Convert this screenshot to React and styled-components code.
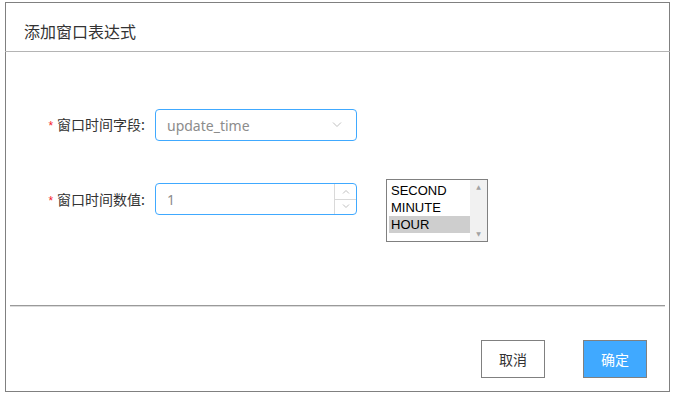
import React, { useState } from 'react'
import styled, { createGlobalStyle } from 'styled-components'

const GlobalStyle = createGlobalStyle`
  html, body {
    margin: 0;
    padding: 0;
    background: #fff;
  }
  body {
    font-family: "Noto Sans CJK SC", "Liberation Sans", sans-serif;
  }
`

const units = ['SECOND', 'MINUTE', 'HOUR']

const Chevron = ({ up }) => (
  <svg width="10" height="6" viewBox="0 0 10 6">
    <path
      d={up ? 'M1 5.5 L5 1.5 L9 5.5' : 'M1 0.5 L5 4.5 L9 0.5'}
      fill="none"
      stroke="#bfbfbf"
      strokeWidth="1"
    />
  </svg>
)

const SmallChevron = ({ up }) => (
  <svg width="8" height="5" viewBox="0 0 8 5">
    <path
      d={up ? 'M1 4.5 L4 1.5 L7 4.5' : 'M1 0.5 L4 3.5 L7 0.5'}
      fill="none"
      stroke="#bfbfbf"
      strokeWidth="1"
    />
  </svg>
)

function App() {
  const [unit, setUnit] = useState('HOUR')

  return (
    <>
      <GlobalStyle />
      <Dialog>
        <Header>添加窗口表达式</Header>
        <Body>
          <Row>
            <Label><Star>*</Star>窗口时间字段:</Label>
            <SelectBox>
              <Value>update_time</Value>
              <Chevron />
            </SelectBox>
          </Row>
          <Row top>
            <Label offset>
              <Star>*</Star>窗口时间数值:
            </Label>
            <NumberBox>
              <Value>1</Value>
              <Spinner>
                <SpinBtn><SmallChevron up /></SpinBtn>
                <SpinBtn bottom><SmallChevron /></SpinBtn>
              </Spinner>
            </NumberBox>
            <ListBox>
              <Options>
                {units.map(u => (
                  <Option key={u} selected={u === unit} onClick={() => setUnit(u)}>
                    {u}
                  </Option>
                ))}
              </Options>
              <ScrollBar>
                <ScrollArrow>▲</ScrollArrow>
                <ScrollArrow>▼</ScrollArrow>
              </ScrollBar>
            </ListBox>
          </Row>
        </Body>
        <Footer>
          <Button>取消</Button>
          <Button primary>确定</Button>
        </Footer>
      </Dialog>
    </>
  )
}

const Dialog = styled.div`
  box-sizing: border-box;
  margin: 2px 0 0 5px;
  width: 665px;
  height: 390px;
  border: 1px solid #808080;
  display: flex;
  flex-direction: column;
  background: #fff;
`

const Header = styled.div`
  height: 49px;
  box-sizing: border-box;
  padding: 17px 0 0 19px;
  font-size: 16px;
  line-height: 22px;
  color: #333;
  border-bottom: 1px solid #b4b4b4;
  margin: 0 -1px;
`

const Body = styled.div`
  height: 254px;
  box-sizing: border-box;
  padding-top: 56px;
  display: flex;
  flex-direction: column;
  gap: 37px;
  border-bottom: 1px solid #9a9a9a;
  box-shadow: 0 1px 0 #dcdcdc;
  margin: 0 4px;
`

const Row = styled.div`
  display: flex;
  align-items: ${p => (p.top ? 'flex-start' : 'center')};
`

const Label = styled.div`
  width: 135px;
  margin-right: 10px;
  text-align: right;
  font-size: 14px;
  line-height: 32px;
  color: #333;
  white-space: nowrap;
  margin-top: ${p => (p.offset ? '4px' : '0')};
`

const Star = styled.span`
  color: #f5222d;
  font-family: "Liberation Sans", sans-serif;
  font-size: 12px;
  margin-right: 4px;
`

const SelectBox = styled.div`
  box-sizing: border-box;
  width: 202px;
  height: 32px;
  border: 1px solid #40a9ff;
  border-radius: 4px;
  display: flex;
  align-items: center;
  justify-content: space-between;
  padding: 0 14px 0 11px;
`

const Value = styled.span`
  font-family: "Noto Sans", "Liberation Sans", sans-serif;
  font-size: 14px;
  color: #8c8c8c;
`

const NumberBox = styled.div`
  box-sizing: border-box;
  width: 202px;
  height: 32px;
  margin-top: 4px;
  border: 1px solid #40a9ff;
  border-radius: 4px;
  display: flex;
  align-items: center;
  justify-content: space-between;
  padding-left: 11px;
  overflow: hidden;
`

const Spinner = styled.div`
  width: 21px;
  height: 100%;
  border-left: 1px solid #d9d9d9;
  display: flex;
  flex-direction: column;
`

const SpinBtn = styled.div`
  flex: 1;
  display: flex;
  align-items: center;
  justify-content: center;
  border-top: ${p => (p.bottom ? '1px solid #d9d9d9' : 'none')};
`

const ListBox = styled.div`
  box-sizing: border-box;
  margin-left: 29px;
  width: 102px;
  height: 63px;
  border: 1px solid #808080;
  display: flex;
  background: #fff;
`

const Options = styled.div`
  flex: 1;
  padding: 2px 0 0 2px;
  font-family: "Liberation Sans", Arial, sans-serif;
  font-size: 13px;
  color: #000;
`

const Option = styled.div`
  height: 17px;
  line-height: 17px;
  padding-left: 2px;
  cursor: default;
  background: ${p => (p.selected ? '#cecece' : 'transparent')};
`

const ScrollBar = styled.div`
  width: 17px;
  background: #f1f1f1;
  display: flex;
  flex-direction: column;
  justify-content: space-between;
  align-items: center;
`

const ScrollArrow = styled.span`
  font-size: 6px;
  line-height: 14px;
  color: #a3a3a3;
  font-family: "DejaVu Sans", sans-serif;
`

const Footer = styled.div`
  flex: 1;
  display: flex;
  justify-content: flex-end;
  align-items: flex-start;
  gap: 38px;
  padding: 34px 22px 0 0;
`

const Button = styled.button`
  box-sizing: border-box;
  width: 64px;
  height: 38px;
  border: 1px solid #808080;
  border-radius: 0;
  background: ${p => (p.primary ? '#40a9ff' : '#fff')};
  color: ${p => (p.primary ? '#fff' : '#333')};
  font-family: "Noto Sans CJK SC", sans-serif;
  font-size: 14px;
  padding: 0;
  cursor: pointer;
`

export default App
